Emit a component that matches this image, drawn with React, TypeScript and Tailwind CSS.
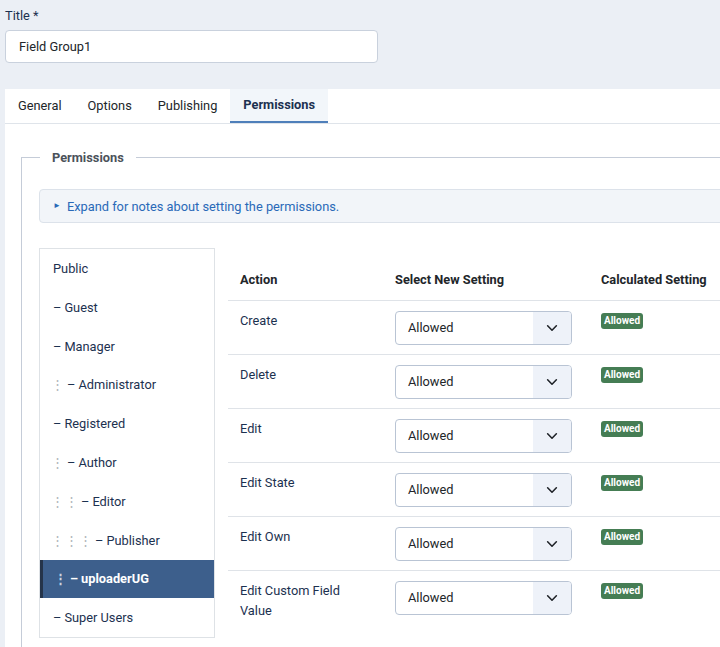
import React from "react";

const groups: { name: string; level: number; active?: boolean }[] = [
  { name: "Public", level: -1 },
  { name: "Guest", level: 0 },
  { name: "Manager", level: 0 },
  { name: "Administrator", level: 1 },
  { name: "Registered", level: 0 },
  { name: "Author", level: 1 },
  { name: "Editor", level: 2 },
  { name: "Publisher", level: 3 },
  { name: "uploaderUG", level: 1, active: true },
  { name: "Super Users", level: 0 },
];

const actions = ["Create", "Delete", "Edit", "Edit State", "Edit Own", "Edit Custom Field Value"];

function Chevron() {
  return (
    <svg width="14" height="14" viewBox="0 0 16 16" fill="none" stroke="#1f2328" strokeWidth="1.8" strokeLinecap="round" strokeLinejoin="round">
      <path d="M3 5.5l5 5 5-5" />
    </svg>
  );
}

function SettingSelect() {
  return (
    <div className="flex h-[34px] w-[177px] overflow-hidden rounded-[4px] border border-[#b9c4d4] bg-white">
      <div className="flex flex-1 items-center pl-[12px] text-[12.8px] text-[#22262a]">Allowed</div>
      <div className="flex w-[38px] items-center justify-center bg-[#eef2f9]">
        <Chevron />
      </div>
    </div>
  );
}

function GroupItem({ name, level, active }: { name: string; level: number; active?: boolean }) {
  return (
    <div
      className={
        "flex h-[38.8px] items-center pl-[13px] text-[12.8px] " +
        (active ? "border-l-[3px] border-[#25344a] bg-[#3d5f8c] pl-[10px] font-bold text-white" : "text-[#1c3150]")
      }
    >
      {Array.from({ length: Math.max(level, 0) }).map((_, i) => (
        <span key={i} className={"-ml-[2px] mr-[2px] w-[14px] shrink-0 " + (active ? "text-[#c9d3e0]" : "text-[#b0b5bb]")}>
          ⋮
        </span>
      ))}
      {level >= 0 ? <span className="mr-[3px]">–</span> : null}
      <span>{name}</span>
    </div>
  );
}

export default function App() {
  return (
    <div className="h-[647px] w-[720px] overflow-hidden bg-[#ebeff5] font-['Roboto',sans-serif]">
      <div className="px-[5px] pt-[7px]">
        <label className="block text-[12.8px] leading-[18px] text-[#1c3150]">Title *</label>
        <div className="mt-[5px] flex h-[33px] w-[373px] items-center rounded-[4px] border border-[#c9d1dd] bg-white pl-[13px] text-[12.8px] text-[#22262a]">
          Field Group1
        </div>
      </div>

      <div className="ml-[5px] mt-[26px] w-[780px] bg-white">
        <div className="flex h-[35px] border-b border-[#dfe4ea] text-[12.8px] text-[#22262a]">
          <div className="flex items-center px-[13px]">General</div>
          <div className="flex items-center px-[13px]">Options</div>
          <div className="flex items-center px-[13px]">Publishing</div>
          <div className="flex items-center border-b-2 border-[#4f7fba] bg-[#f2f6fa] px-[13px] font-bold text-[#1c3150]">
            Permissions
          </div>
        </div>

        <div className="px-[16px] pt-[24px]">
          <fieldset className="border border-[#c5ccd8] pb-[20px] pl-[17px]">
            <legend className="ml-[1px] px-[12px] text-[12.8px] font-bold text-[#4b525a]">Permissions</legend>

            <div className="mt-[22px] flex h-[34px] items-center rounded-[4px] border border-[#dce2ea] bg-[#f2f5f9] pl-[13px] text-[12.8px] text-[#2a69b8]">
              <span className="mr-[6px] text-[8px]">►</span>
              Expand for notes about setting the permissions.
            </div>

            <div className="mt-[25px] flex items-start gap-[13px]">
              <div className="w-[176px] shrink-0 border border-[#dee2e6]">
                {groups.map((g) => (
                  <GroupItem key={g.name} {...g} />
                ))}
              </div>

              <table className="w-[540px] border-collapse text-[12.8px]">
                <thead>
                  <tr className="border-b border-[#dfe3e8]">
                    <th className="h-[52px] w-[155px] px-[12px] pt-[12px] text-left font-bold text-[#22262a]">Action</th>
                    <th className="w-[206px] px-[12px] pt-[12px] text-left font-bold text-[#22262a]">Select New Setting</th>
                    <th className="px-[12px] pt-[12px] text-left font-bold text-[#22262a]">Calculated Setting</th>
                  </tr>
                </thead>
                <tbody>
                  {actions.map((a) => (
                    <tr key={a} className="border-b border-[#dfe3e8] last:border-b-0">
                      <td className="h-[54px] px-[12px] py-[10px] align-top leading-[20px] text-[#1c3150]">{a}</td>
                      <td className="px-[12px] pt-[10px] align-top">
                        <SettingSelect />
                      </td>
                      <td className="px-[12px] pt-[12px] align-top">
                        <span className="block w-fit rounded-[3px] bg-[#457d54] px-[3px] text-[10px] font-bold leading-[16px] text-white">
                          Allowed
                        </span>
                      </td>
                    </tr>
                  ))}
                </tbody>
              </table>
            </div>
          </fieldset>
        </div>
      </div>
    </div>
  );
}
